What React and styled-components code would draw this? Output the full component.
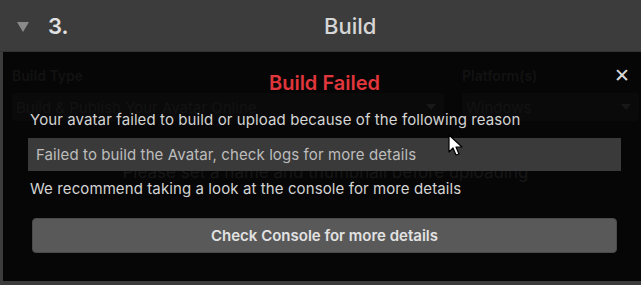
import React from "react";
import styled, { createGlobalStyle } from "styled-components";

const GlobalStyle = createGlobalStyle`
  html, body {
    margin: 0;
    padding: 0;
    background: #3c3c3c;
  }
  * { box-sizing: border-box; }
`;

const Page = styled.div`
  width: 641px;
  height: 285px;
  display: flex;
  flex-direction: column;
  font-family: Inter, "Noto Sans", sans-serif;
  overflow: hidden;
`;

const Header = styled.div`
  height: 52px;
  flex: none;
  display: flex;
  align-items: center;
  padding-left: 17px;
  background: #3c3c3c;
  border-bottom: 1px solid #333;
`;

const Caret = styled.span`
  width: 0;
  height: 0;
  border-left: 6px solid transparent;
  border-right: 6px solid transparent;
  border-top: 10px solid #8a8a8a;
  margin-top: 2px;
`;

const StepNo = styled.span`
  margin-left: 19px;
  font-size: 22px;
  font-weight: 600;
  color: #e2e2e2;
`;

const HeaderTitle = styled.span`
  flex: 1;
  text-align: center;
  padding-right: 9px;
  font-size: 22px;
  font-weight: 500;
  color: #d6d6d6;
`;

const Panel = styled.div`
  flex: 1;
  margin: 0 0 4px 3px;
  background: #060606;
  position: relative;
`;

const Form = styled.div`
  padding: 15px 2px 0 9px;
  display: grid;
  grid-template-columns: 432px 1fr;
  column-gap: 18px;
  row-gap: 9px;
`;

const FieldLabel = styled.div`
  font-size: 14px;
  font-weight: 600;
  color: #121212;
`;

const Dropdown = styled.div`
  height: 28px;
  display: flex;
  align-items: center;
  justify-content: space-between;
  padding: 0 8px 0 4px;
  background: #0a0a0a;
  border-radius: 3px;
  font-size: 15px;
  color: #131313;
`;

const DropArrow = styled.span`
  width: 0;
  height: 0;
  border-left: 5px solid transparent;
  border-right: 5px solid transparent;
  border-top: 6px solid #181818;
`;

const Notice = styled.div`
  grid-column: 1 / -1;
  margin-top: 32px;
  text-align: center;
  font-size: 17px;
  color: #161616;
`;

const Modal = styled.div`
  position: absolute;
  inset: 0;
  padding: 18px 20px 0 25px;
  display: flex;
  flex-direction: column;
`;

const ModalTitle = styled.div`
  text-align: center;
  font-size: 20px;
  font-weight: 600;
  color: #e0363c;
  height: 26px;
  line-height: 26px;
`;

const Close = styled.div`
  position: absolute;
  top: 13px;
  right: 11px;
  font-size: 19px;
  line-height: 20px;
  color: #d8d8d8;
  font-family: "DejaVu Sans", sans-serif;
`;

const Text = styled.div`
  font-size: 15px;
  letter-spacing: 0.1px;
  color: #d4d4d4;
  padding-left: 2px;
  margin-top: ${p => p.$top || 0}px;
`;

const ErrorBox = styled.div`
  margin-top: 9px;
  height: 33px;
  display: flex;
  align-items: center;
  padding-left: 8px;
  background: #3a3a3a;
  font-size: 15px;
  letter-spacing: 0.1px;
  color: #bdbdbd;
`;

const Button = styled.button`
  margin: 20px 4px 0 4px;
  height: 35px;
  border: 1px solid #4a4a4a;
  border-radius: 4px;
  background: #595959;
  color: #e2e2e2;
  font-family: Inter, "Noto Sans", sans-serif;
  font-size: 15px;
  font-weight: 600;
`;

const Cursor = styled.svg`
  position: absolute;
  left: 445px;
  top: 82px;
`;

export default function App() {
  return (
    <>
      <GlobalStyle />
      <Page>
        <Header>
          <Caret />
          <StepNo>3.</StepNo>
          <HeaderTitle>Build</HeaderTitle>
        </Header>
        <Panel>
          <Form>
            <FieldLabel>Build Type</FieldLabel>
            <FieldLabel>Platform(s)</FieldLabel>
            <Dropdown>
              Build &amp; Publish Your Avatar Online
              <DropArrow />
            </Dropdown>
            <Dropdown>
              Windows
              <DropArrow />
            </Dropdown>
            <Notice>Please set a name and thumbnail before uploading</Notice>
          </Form>
          <Modal>
            <ModalTitle>Build Failed</ModalTitle>
            <Close>✕</Close>
            <Text $top={14}>Your avatar failed to build or upload because of the following reason</Text>
            <ErrorBox>Failed to build the Avatar, check logs for more details</ErrorBox>
            <Text $top={8}>We recommend taking a look at the console for more details</Text>
            <Button>Check Console for more details</Button>
          </Modal>
          <Cursor width="18" height="24" viewBox="0 0 18 24">
            <path d="M1 1 L1 18 L5 14 L8 21 L11 20 L8 13 L14 13 Z" fill="#fff" stroke="#000" strokeWidth="1.2" strokeLinejoin="round" />
          </Cursor>
        </Panel>
      </Page>
    </>
  );
}
